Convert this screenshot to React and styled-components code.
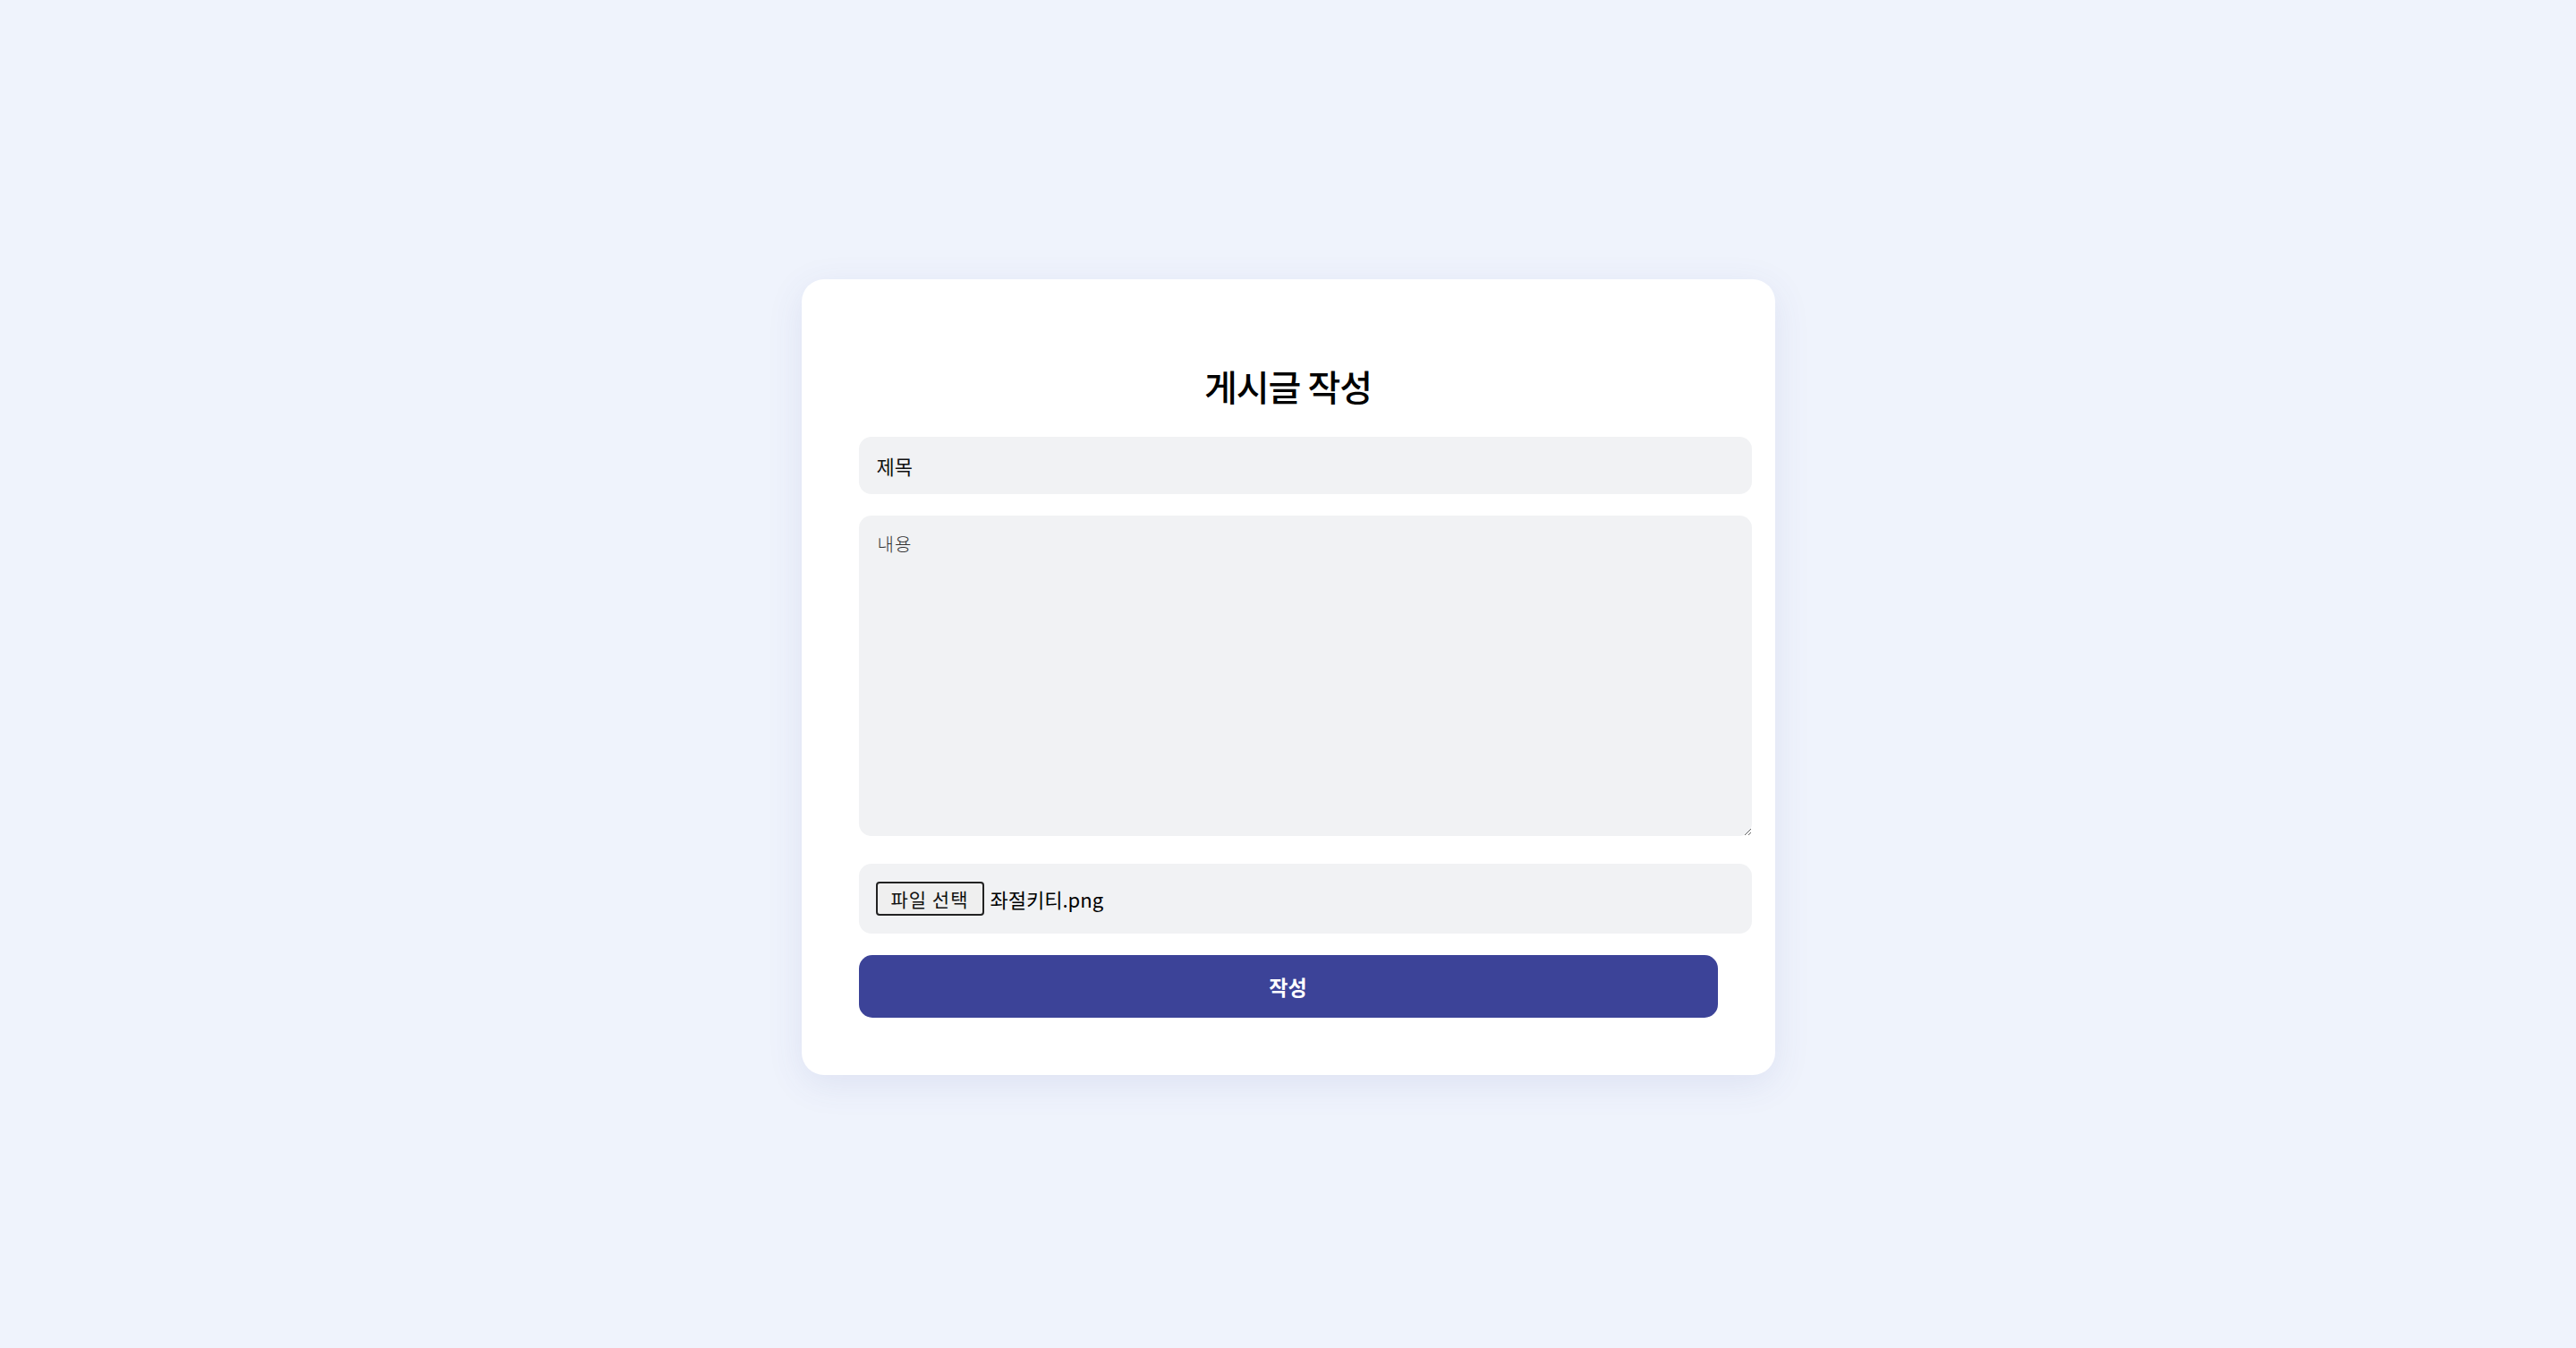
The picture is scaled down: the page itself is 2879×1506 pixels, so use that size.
import React from "react";
import styled, { createGlobalStyle } from "styled-components";

const Global = createGlobalStyle`
  html, body {
    margin: 0;
    padding: 0;
    background: #eff3fc;
  }
  body {
    font-family: "Noto Sans CJK KR", "Noto Sans", sans-serif;
    color: #111;
  }
  * { box-sizing: border-box; }
`;

const Page = styled.div`
  min-height: 100vh;
  display: flex;
  align-items: center;
  justify-content: center;
  padding-top: 7px;
`;

const Card = styled.form`
  width: 1088px;
  padding: 64px;
  background: #ffffff;
  border-radius: 25px;
  box-shadow: 0 10px 40px rgba(70, 80, 160, 0.1);
  display: flex;
  flex-direction: column;
`;

const Title = styled.h2`
  margin: 30px 0 32px;
  height: 50px;
  line-height: 50px;
  text-align: center;
  font-size: 40px;
  font-weight: 500;
  letter-spacing: -1px;
  color: #000;
`;

const Field = styled.div`
  width: calc(100% + 38px);
  padding: 0 19px;
  background: #f1f2f4;
  border-radius: 14px;
`;

const TextInput = styled(Field).attrs({ as: "input" })`
  display: block;
  height: 64px;
  border: none;
  outline: none;
  padding: 0 20px;
  font-family: "Noto Sans CJK KR", "Noto Sans", sans-serif;
  font-size: 22px;
  font-weight: 400;
  color: #111;
  &::placeholder {
    color: #111;
  }
`;

const TextArea = styled(Field).attrs({ as: "textarea" })`
  display: block;
  margin-top: 24px;
  height: 358px;
  border: none;
  outline: none;
  padding: 17px 21px;
  resize: vertical;
  font-family: "Noto Sans CJK KR", sans-serif;
  font-weight: 300;
  font-size: 20px;
  letter-spacing: 1px;
  color: #111;
  &::placeholder {
    color: #333;
  }
`;

const FileBox = styled(Field)`
  margin-top: 31px;
  height: 78px;
  display: flex;
  align-items: center;
  gap: 7px;
`;

const FileButton = styled.button`
  width: 121px;
  height: 38px;
  padding: 0;
  border: 2px solid #222;
  border-radius: 4px;
  background: #efefef;
  font-family: "Noto Sans CJK KR", sans-serif;
  font-size: 21px;
  font-weight: 400;
  color: #111;
  letter-spacing: 1px;
`;

const FileName = styled.span`
  font-family: "Noto Sans CJK KR", "Noto Sans", sans-serif;
  font-size: 22px;
  font-weight: 400;
  color: #000;
`;

const Submit = styled.button`
  margin-top: 24px;
  width: 100%;
  height: 70px;
  border: none;
  border-radius: 15px;
  background: #3c4398;
  color: #fff;
  font-family: "Noto Sans CJK KR", sans-serif;
  font-size: 23px;
  font-weight: 700;
`;

export default function App() {
  return (
    <>
      <Global />
      <Page>
        <Card onSubmit={(e) => e.preventDefault()}>
          <Title>게시글 작성</Title>
          <TextInput type="text" placeholder="제목" />
          <TextArea placeholder="내용" />
          <FileBox>
            <FileButton type="button">파일 선택</FileButton>
            <FileName>좌절키티.png</FileName>
          </FileBox>
          <Submit type="submit">작성</Submit>
        </Card>
      </Page>
    </>
  );
}
